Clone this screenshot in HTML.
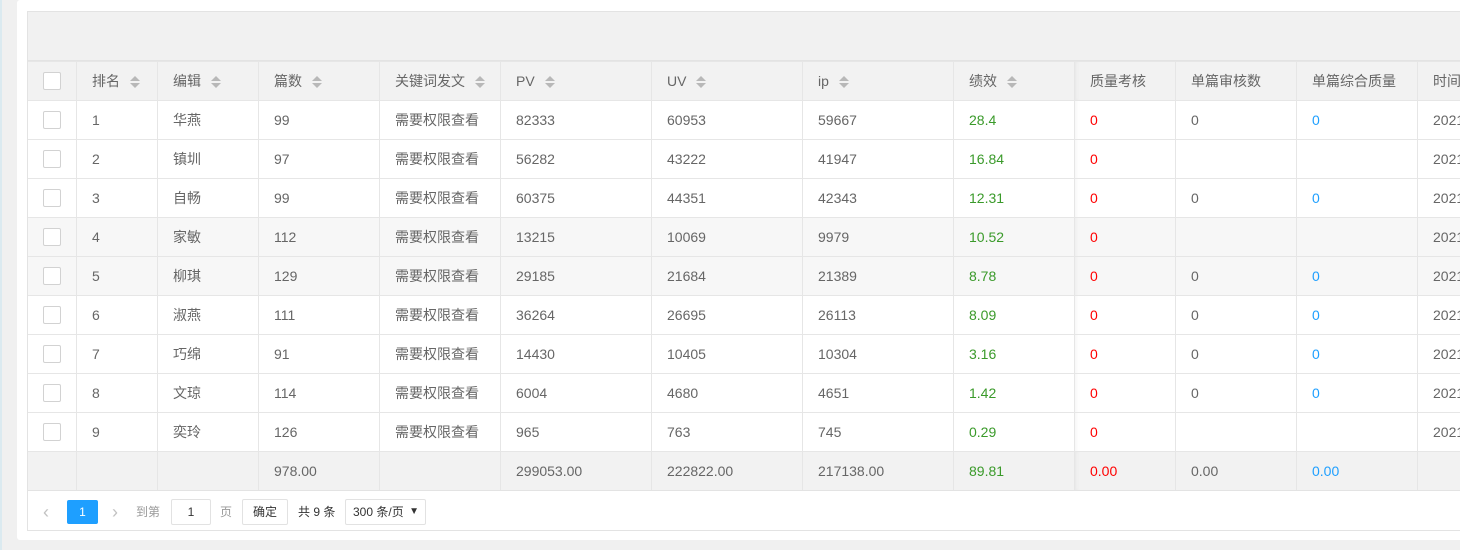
<!DOCTYPE html>
<html><head><meta charset="utf-8"><style>
*{margin:0;padding:0;box-sizing:border-box}
body{width:1460px;height:550px;overflow:hidden;background:#f0f0f0;font-family:"Liberation Sans","Noto Sans CJK SC",sans-serif;font-size:14px;color:#666;position:relative}
.strip{position:absolute;left:0;top:0;width:2px;height:550px;background:#dbeaf0}
.card{position:absolute;left:17px;top:0;width:1450px;height:540px;background:#fff;border-radius:3px}
.box{position:absolute;left:27px;top:11px;width:1450px;height:520px;border:1px solid #e3e3e3;overflow:hidden}
.tool{height:49px;background:#f1f1f1;border-bottom:1px solid #e3e3e3}
table{border-collapse:collapse;table-layout:fixed;position:absolute;left:-1px;top:49px;width:1491px}
td,th{height:39px;border:1px solid #e6e6e6;padding:0 15px;text-align:left;font-weight:normal;white-space:nowrap;overflow:hidden}
th{background:#f2f2f2;color:#666}
.cb{display:inline-block;width:18px;height:18px;border:1px solid #d2d2d2;border-radius:2px;background:#fff;vertical-align:middle}
.s{display:inline-block;vertical-align:middle;margin-left:10px;width:10px;height:14px;position:relative}
.s:before{content:"";position:absolute;left:0;top:1px;border:5px solid transparent;border-top:0;border-bottom:5px solid #b8b8b8}
.s:after{content:"";position:absolute;left:0;top:8px;border:5px solid transparent;border-bottom:0;border-top:5px solid #b8b8b8}
.g{color:#3a9a2a}.r{color:#f00}.b{color:#1e9fff}
tr.gr td{background:#f7f7f7}
tr.sum td{background:#f2f2f2}
.fx{box-shadow:inset 5px 0 5px -4px rgba(0,0,0,.05)}
.pg{position:absolute;left:0;top:478px;height:40px;width:100%;border-top:1px solid #e3e3e3;font-size:12px;color:#666}
.pg span{position:absolute;top:9px;line-height:24px;white-space:nowrap}
.cur{left:39px;width:31px;height:24px;background:#1e9fff;color:#fff;text-align:center;border-radius:2px}
.in{border:1px solid #e2e2e2;background:#fff;text-align:center;height:26px!important;border-radius:2px}
</style></head><body>
<div class="strip"></div>
<div class="card"></div>
<div class="box">
<div class="tool"></div>
<table>
<colgroup><col style="width:49px"><col style="width:81px"><col style="width:101px"><col style="width:121px"><col style="width:121px"><col style="width:151px"><col style="width:151px"><col style="width:151px"><col style="width:121px"><col style="width:101px"><col style="width:121px"><col style="width:121px"><col style="width:100px"></colgroup>
<tr><th><span class="cb"></span></th><th>排名<i class="s"></i></th><th>编辑<i class="s"></i></th><th>篇数<i class="s"></i></th><th>关键词发文<i class="s"></i></th><th>PV<i class="s"></i></th><th>UV<i class="s"></i></th><th>ip<i class="s"></i></th><th>绩效<i class="s"></i></th><th class="fx">质量考核</th><th>单篇审核数</th><th>单篇综合质量</th><th>时间</th></tr>
<tr><td><span class="cb"></span></td><td>1</td><td>华燕</td><td>99</td><td>需要权限查看</td><td>82333</td><td>60953</td><td>59667</td><td class="g">28.4</td><td class="r fx">0</td><td>0</td><td class="b">0</td><td>2021</td></tr>
<tr><td><span class="cb"></span></td><td>2</td><td>镇圳</td><td>97</td><td>需要权限查看</td><td>56282</td><td>43222</td><td>41947</td><td class="g">16.84</td><td class="r fx">0</td><td></td><td></td><td>2021</td></tr>
<tr><td><span class="cb"></span></td><td>3</td><td>自畅</td><td>99</td><td>需要权限查看</td><td>60375</td><td>44351</td><td>42343</td><td class="g">12.31</td><td class="r fx">0</td><td>0</td><td class="b">0</td><td>2021</td></tr>
<tr class="gr"><td><span class="cb"></span></td><td>4</td><td>家敏</td><td>112</td><td>需要权限查看</td><td>13215</td><td>10069</td><td>9979</td><td class="g">10.52</td><td class="r fx">0</td><td></td><td></td><td>2021</td></tr>
<tr class="gr"><td><span class="cb"></span></td><td>5</td><td>柳琪</td><td>129</td><td>需要权限查看</td><td>29185</td><td>21684</td><td>21389</td><td class="g">8.78</td><td class="r fx">0</td><td>0</td><td class="b">0</td><td>2021</td></tr>
<tr><td><span class="cb"></span></td><td>6</td><td>淑燕</td><td>111</td><td>需要权限查看</td><td>36264</td><td>26695</td><td>26113</td><td class="g">8.09</td><td class="r fx">0</td><td>0</td><td class="b">0</td><td>2021</td></tr>
<tr><td><span class="cb"></span></td><td>7</td><td>巧绵</td><td>91</td><td>需要权限查看</td><td>14430</td><td>10405</td><td>10304</td><td class="g">3.16</td><td class="r fx">0</td><td>0</td><td class="b">0</td><td>2021</td></tr>
<tr><td><span class="cb"></span></td><td>8</td><td>文琼</td><td>114</td><td>需要权限查看</td><td>6004</td><td>4680</td><td>4651</td><td class="g">1.42</td><td class="r fx">0</td><td>0</td><td class="b">0</td><td>2021</td></tr>
<tr><td><span class="cb"></span></td><td>9</td><td>奕玲</td><td>126</td><td>需要权限查看</td><td>965</td><td>763</td><td>745</td><td class="g">0.29</td><td class="r fx">0</td><td></td><td></td><td>2021</td></tr>
<tr class="sum"><td></td><td></td><td></td><td>978.00</td><td></td><td>299053.00</td><td>222822.00</td><td>217138.00</td><td class="g">89.81</td><td class="r fx">0.00</td><td>0.00</td><td class="b">0.00</td><td></td></tr>
</table>
<div class="pg">
<span style="left:15px;color:#c2c2c2;font-size:18px">‹</span>
<span class="cur">1</span>
<span style="left:84px;color:#c2c2c2;font-size:18px">›</span>
<span style="left:108px;color:#999">到第</span>
<span class="in" style="left:143px;width:40px;top:8px;line-height:24px;color:#333">1</span>
<span style="left:192px;color:#999">页</span>
<span class="in" style="left:214px;width:46px;top:8px;color:#333">确定</span>
<span style="left:270px;color:#333">共 9 条</span>
<span class="in" style="left:317px;width:81px;top:8px;color:#333;text-align:left;padding-left:7px">300 条/页<b style="position:absolute;right:6px;top:0;font-size:10px">▼</b></span>
</div>
</div>
</body></html>
